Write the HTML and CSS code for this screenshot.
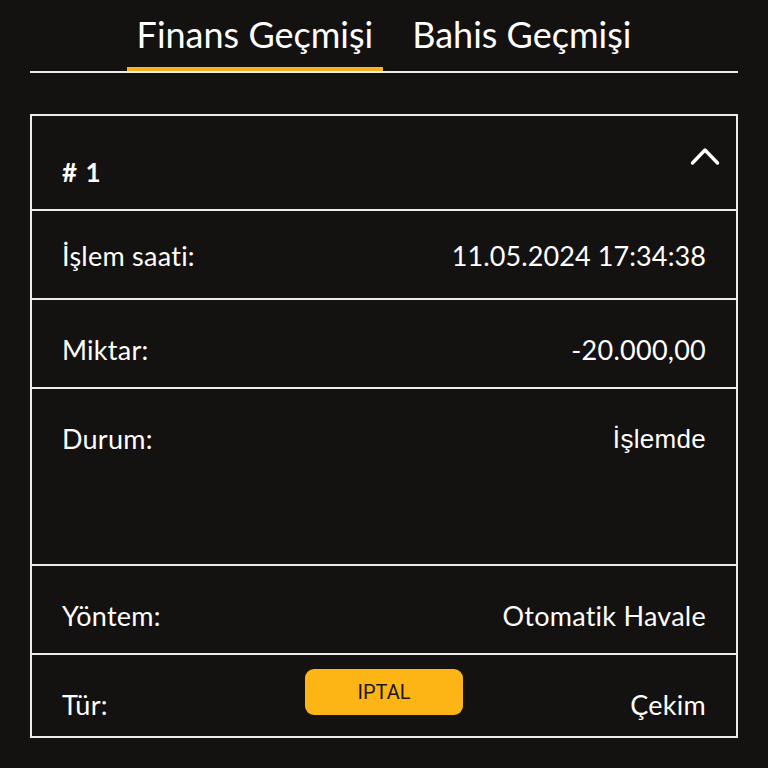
FILE: index.html
```html
<!DOCTYPE html>
<html lang="tr">
<head>
<meta charset="utf-8">
<title>Finans Geçmişi</title>
<link rel="stylesheet" href="styles.css">
</head>
<body>
<div class="page">
  <nav class="tabs">
    <div class="tab tab-active">Finans Geçmişi</div>
    <div class="tab">Bahis Geçmişi</div>
  </nav>
  <section class="card">
    <div class="card-head">
      <div class="card-title"># 1</div>
      <svg class="chevron" width="30" height="20" viewBox="0 0 30 20">
        <polyline points="2.5,17 15,4 27.5,17" fill="none" stroke="#ffffff" stroke-width="3.4" stroke-linecap="round" stroke-linejoin="round"/>
      </svg>
    </div>
    <div class="row row-first">
      <span class="label">İşlem saati:</span>
      <span class="value value-date">11.05.2024 17:34:38</span>
    </div>
    <div class="row">
      <span class="label">Miktar:</span>
      <span class="value">-20.000,00</span>
    </div>
    <div class="row row-tall">
      <span class="label">Durum:</span>
      <span class="value value-alt">İşlemde</span>
    </div>
    <div class="row">
      <span class="label">Yöntem:</span>
      <span class="value">Otomatik Havale</span>
    </div>
    <div class="row row-type">
      <span class="label">Tür:</span>
      <button class="cancel">IPTAL</button>
      <span class="value">Çekim</span>
    </div>
  </section>
</div>
</body>
</html>
```

FILE: styles.css
```css
html, body {
  margin: 0;
  padding: 0;
  background: #141111;
}

body {
  font-family: Lato, "Open Sans", sans-serif;
  color: #ffffff;
}

.page {
  padding: 0 30px;
}

.tabs {
  display: flex;
  justify-content: center;
  gap: 19px;
  border-bottom: 2px solid #ececec;
}

.tab {
  font-size: 36px;
  line-height: 40px;
  padding: 14px 10px 13px;
  border-bottom: 4px solid transparent;
  white-space: nowrap;
}

.tab-active {
  border-bottom-color: #f6b51c;
}

.card {
  margin-top: 41px;
  border: 2px solid #ececec;
}

.card-head {
  height: 93px;
  box-sizing: border-box;
  display: flex;
  justify-content: space-between;
  align-items: flex-start;
  padding: 0 16px 0 30px;
}

.card-title {
  font-size: 26px;
  font-weight: 700;
  line-height: 30px;
  padding-top: 41px;
  word-spacing: 2px;
}

.chevron {
  margin-top: 30px;
}

.row {
  height: 89px;
  box-sizing: border-box;
  border-top: 2px solid #ececec;
  display: flex;
  justify-content: space-between;
  align-items: flex-start;
  padding: 35px 30px 0;
  font-size: 27px;
  line-height: 30px;
  letter-spacing: 0.25px;
}

.row-first {
  padding-top: 30px;
}

.value-date {
  letter-spacing: 0.1px;
}

.row-tall {
  height: 177px;
}

.value-alt {
  font-family: "Liberation Sans", Arial, sans-serif;
  font-size: 26px;
  letter-spacing: 0.3px;
}

.row-type {
  height: 83px;
  display: grid;
  grid-template-columns: 1fr auto 1fr;
  padding-top: 14px;
}

.row-type .label {
  justify-self: start;
  padding-top: 21px;
}

.row-type .value {
  justify-self: end;
  padding-top: 21px;
}

.cancel {
  width: 158px;
  height: 46px;
  border: none;
  border-radius: 9px;
  background: #fdb515;
  color: #1b1710;
  font-family: Roboto, "Liberation Sans", sans-serif;
  font-size: 20px;
  letter-spacing: 0;
  padding: 0;
}
```
